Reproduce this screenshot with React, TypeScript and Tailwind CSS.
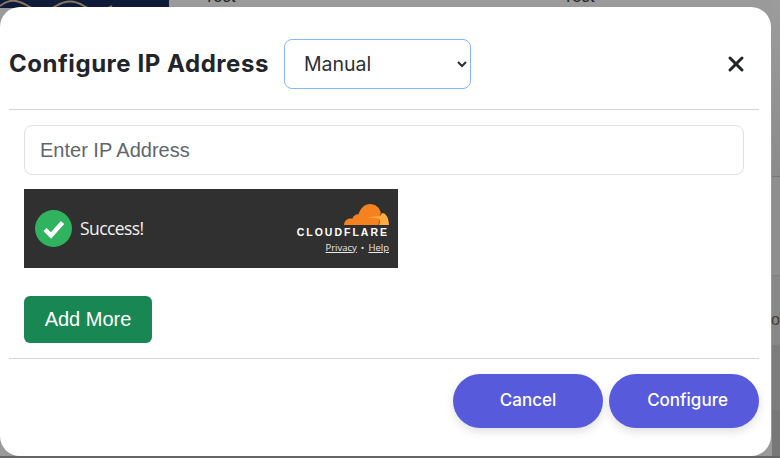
import { X } from "lucide-react";

function CloudflareWidget() {
  return (
    <div className="flex h-[79px] w-[374px] items-center justify-between bg-[#303030] pl-[11px] pr-[9px] text-white">
      <div className="flex items-center gap-2">
        <svg width="37" height="37" viewBox="0 0 37 37">
          <circle cx="18.5" cy="18.5" r="18.5" fill="#30b35f" />
          <path d="M10 19.5l6 6L27.5 12.5" fill="none" stroke="#fff" strokeWidth="4.5" />
        </svg>
        <span className="font-['Open_Sans',sans-serif] text-[17.5px] tracking-[-0.6px] text-[#f2f2f2]">
          Success!
        </span>
      </div>
      <div className="flex flex-col items-end pt-[1px]">
        <svg width="46" height="21" viewBox="0 0 46 21">
          <path
            d="M1 21c.3-4 3-6.500 6.500-6.500.6 0 1.200.1 1.800.3C10.500 11.500 13 10 15.500 10.300 17.500 4 22 0 27 0c5.500 0 9.500 3.500 10.800 8.500l-.8 5.500-1.500 7z"
            fill="#f6821f"
          />
          <path
            d="M36 21l.8-3.500c.3-1.500-.5-3-2-3.300L24 13.500l12.500-1.500c1.300-.2 2-1.500 2.200-3C42.500 9 45.500 12 46 21z"
            fill="#fbad41"
          />
        </svg>
        <span className="mt-[1px] font-['Liberation_Sans',sans-serif] text-[10.5px] font-bold leading-[12px] tracking-[2px] text-white">
          CLOUDFLARE
        </span>
        <div className="mt-[3px] flex items-center gap-[4px] font-['Open_Sans',sans-serif] text-[9.5px] leading-[14px] text-[#e8e8e8]">
          <span className="underline">Privacy</span>
          <span>•</span>
          <span className="underline">Help</span>
        </div>
      </div>
    </div>
  );
}

export default function App() {
  return (
    <div className="relative h-[458px] w-[780px] overflow-hidden bg-[#9a9a9a] font-['Inter',sans-serif]">
      {/* page behind the dimmed backdrop */}
      <div className="absolute left-0 top-0 h-2 w-[169px] bg-[#0e1c3a]">
        <svg width="169" height="8" viewBox="0 0 169 8">
          <path
            d="M0 6c10-8 18-6 28 0s18 6 28 0 18-6 28 0 18 6 28 0"
            fill="none"
            stroke="#8a7660"
            strokeWidth="2"
          />
        </svg>
      </div>
      <span className="absolute left-[204px] top-[-12px] text-base leading-4 text-[#222]">Test</span>
      <span className="absolute left-[563px] top-[-12px] text-base leading-4 text-[#222]">Test</span>
      <div className="absolute right-0 top-0 h-[177px] w-2 border-b border-[#777] bg-gradient-to-b from-[#9c9c9c] to-[#8b8b8b]" />
      <div className="absolute right-0 top-[177px] h-[99px] w-2 border-b border-[#808080] bg-[#8e8e8e]" />
      <div className="absolute right-0 top-[276px] h-[69px] w-2 bg-[#888888]" />
      <div className="absolute right-0 top-[345px] h-[65px] w-2 bg-[#7d7d7d]" />
      <div className="absolute right-0 top-[410px] h-12 w-2 bg-[#787878]" />
      <span className="absolute left-[771px] top-[310px] font-['Liberation_Sans',sans-serif] text-base leading-5 text-[#4a3a30]">
        or
      </span>
      <div className="absolute bottom-0 left-0 h-[2px] w-full bg-[#666]" />

      <div className="absolute left-0 top-[7px] flex h-[449px] w-[771px] flex-col rounded-[20px] bg-white px-[9px] pr-3 text-[#212529]">
        <div className="flex h-[103px] shrink-0 items-center border-b border-[#d4d4d4] pb-[2px] pt-[14px]">
          <h2 className="text-[24px] font-bold leading-7 tracking-[0.55px]">Configure IP Address</h2>
          <select className="ml-[15px] h-[50px] w-[187px] rounded-lg border border-[#86b7fe] bg-white pl-[15px] text-[19.5px] text-[#2b3035] outline-none">
            <option>Manual</option>
          </select>
          <button type="button" className="ml-auto mr-[11px] text-[#212529]">
            <X size={24} strokeWidth={3} />
          </button>
        </div>

        <div className="flex flex-1 flex-col items-start border-b border-[#d4d4d4] px-[15px] pt-[15px]">
          <input
            placeholder="Enter IP Address"
            className="h-[50px] w-[720px] rounded-lg border border-[#dee2e6] px-[15px] font-['Liberation_Sans',sans-serif] text-[20px] text-[#212529] outline-none placeholder:text-[#5f666d]"
          />
          <div className="mt-[14px]">
            <CloudflareWidget />
          </div>
          <button
            type="button"
            className="mt-[28px] h-[47px] w-[128px] rounded-md bg-[#198754] pb-[2px] font-['Liberation_Sans',sans-serif] text-[20px] text-white"
          >
            Add More
          </button>
        </div>

        <div className="flex h-[97px] shrink-0 justify-end gap-[6px] pt-[15px]">
          <button
            type="button"
            className="h-[54px] w-[150px] rounded-[27px] bg-[#565adb] pb-[1px] text-[17px] font-medium text-white shadow-[0_4px_10px_rgba(0,0,0,0.12)]"
          >
            Cancel
          </button>
          <button
            type="button"
            className="h-[54px] w-[150px] rounded-[27px] bg-[#565adb] pb-[1px] pl-[7px] text-[17px] font-medium text-white shadow-[0_4px_10px_rgba(0,0,0,0.12)]"
          >
            Configure
          </button>
        </div>
      </div>
    </div>
  );
}
